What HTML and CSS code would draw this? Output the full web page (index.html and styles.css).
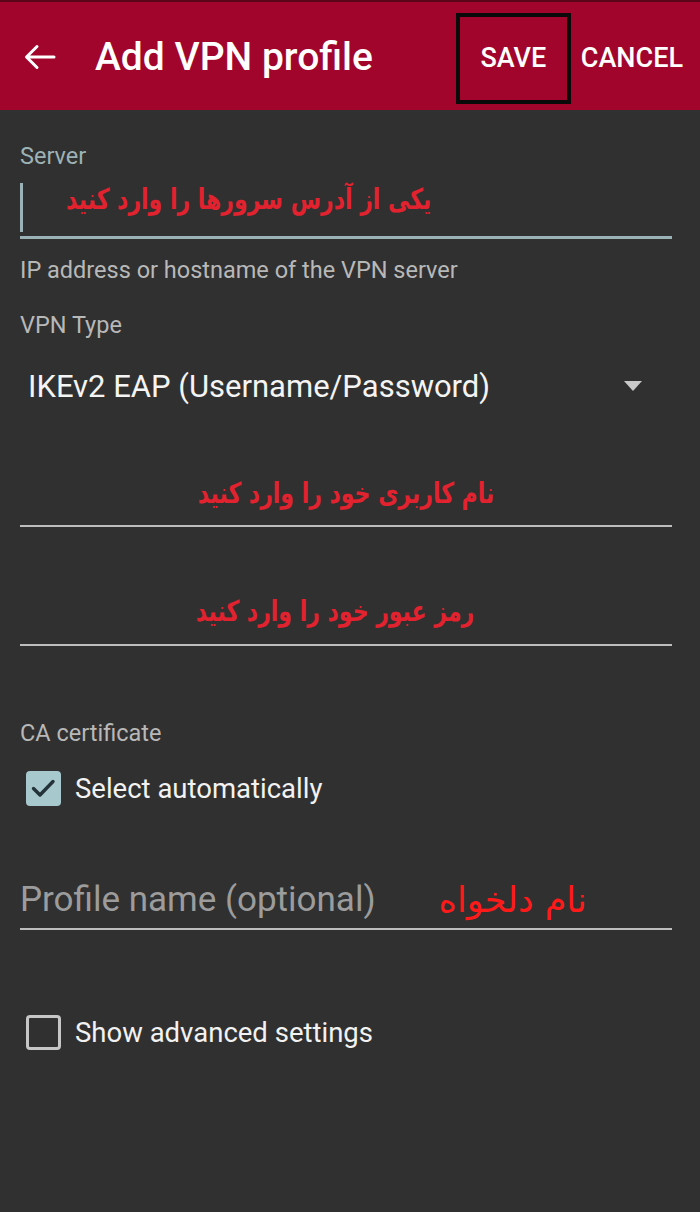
FILE: index.html
```html
<!DOCTYPE html>
<html lang="en">
<head>
<meta charset="utf-8">
<title>Add VPN profile</title>
<link rel="stylesheet" href="styles.css">
</head>
<body>
<header class="appbar">
  <svg class="back" width="32" height="30" viewBox="0 0 32 30" aria-hidden="true">
    <path d="M30 15H3M13 4.5L2.5 15L13 25.5" fill="none" stroke="#ffffff" stroke-width="3" stroke-linecap="round" stroke-linejoin="round"/>
  </svg>
  <h1 class="title">Add VPN profile</h1>
  <button class="action save">SAVE</button>
  <button class="action cancel">CANCEL</button>
</header>

<main class="form">
  <div class="label server-label">Server</div>
  <div class="server-input">
    <span class="cursor"></span>
    <span class="fa fa-bold server-hint" dir="rtl">یکی از آدرس سرورها را وارد کنید</span>
  </div>
  <div class="label help">IP address or hostname of the VPN server</div>

  <div class="label type-label">VPN Type</div>
  <div class="select">
    <span class="select-value">IKEv2 EAP (Username/Password)</span>
    <span class="triangle"></span>
  </div>

  <div class="field user">
    <span class="fa fa-bold" dir="rtl">نام کاربری خود را وارد کنید</span>
  </div>
  <div class="field pass">
    <span class="fa fa-bold" dir="rtl">رمز عبور خود را وارد کنید</span>
  </div>

  <div class="label ca-label">CA certificate</div>
  <div class="check-row auto">
    <span class="box checked">
      <svg width="34" height="34" viewBox="0 0 34 34" aria-hidden="true">
        <path d="M7.5 17.5L14 24L27 10.5" fill="none" stroke="#24323a" stroke-width="3.4" stroke-linecap="round" stroke-linejoin="round"/>
      </svg>
    </span>
    <span class="check-text">Select automatically</span>
  </div>

  <div class="profile">
    <span class="placeholder">Profile name (optional)</span>
    <span class="fa profile-hint" dir="rtl">نام دلخواه</span>
  </div>

  <div class="check-row advanced">
    <span class="box empty"></span>
    <span class="check-text">Show advanced settings</span>
  </div>
</main>
</body>
</html>
```
FILE: styles.css
```css
* { box-sizing: border-box; }
html, body {
  margin: 0;
  padding: 0;
  background: #303030;
}
body {
  width: 700px;
  height: 1212px;
  overflow: hidden;
  font-family: Roboto, "Noto Sans", sans-serif;
  color: #f2f2f2;
}

.appbar {
  height: 110px;
  background: #a2052b;
  border-top: 2px solid #5c0719;
  display: flex;
  align-items: center;
  padding-left: 24px;
}
.back { flex: none; display: block; margin-top: 2px; }
.title {
  margin: 2px 0 0 39px;
  font-size: 39px;
  font-weight: 500;
  color: #ffffff;
  flex: 1;
  white-space: nowrap;
}
.action {
  background: none;
  border: 0;
  color: #ffffff;
  font-family: Roboto, sans-serif;
  font-weight: 500;
  font-size: 27px;
  padding: 0;
  margin-top: 4px;
  flex: none;
}
.save {
  width: 115px;
  height: 91px;
  border: 4px solid #0a0a0a;
  margin-right: 10px;
}
.cancel { margin-right: 17px; }

.form {
  padding: 0 28px 0 20px;
}
.label {
  font-size: 23.5px;
  line-height: 28px;
  color: #b8b8b8;
}
.server-label {
  margin-top: 32px;
  color: #9db3b6;
}
.server-input {
  height: 69px;
  border-bottom: 3px solid #9ab2b5;
  display: flex;
  align-items: flex-start;
}
.cursor {
  width: 3px;
  height: 49px;
  margin-top: 13px;
  background: #9ab2b5;
  flex: none;
}
.fa {
  font-family: "DejaVu Sans", "Noto Sans", sans-serif;
  color: #e2222f;
}
.fa-bold {
  font-weight: bold;
  display: inline-block;
  transform: scaleY(1.3);
}
.server-hint {
  font-size: 22px;
  line-height: 36px;
  margin-top: 12px;
  margin-left: 43px;
}
.help { margin-top: 17px; }
.type-label { margin-top: 27px; }

.select {
  margin-top: 30px;
  height: 36px;
  display: flex;
  align-items: center;
  justify-content: space-between;
  padding-left: 8px;
  padding-right: 30px;
}
.select-value {
  font-size: 31px;
  line-height: 36px;
  color: #f4f4f4;
}
.triangle {
  width: 0;
  height: 0;
  border-left: 9.5px solid transparent;
  border-right: 9.5px solid transparent;
  border-top: 10px solid #c9c9c9;
  margin-top: -2px;
}

.field {
  border-bottom: 2px solid #bdbdbd;
  text-align: center;
  font-size: 22px;
  line-height: 36px;
}
.user { padding: 71px 0 13px; }
.pass { padding: 67px 0 14px; }
.pass .fa { margin-right: 22px; }

.ca-label { margin-top: 73px; }

.check-row {
  display: flex;
  align-items: center;
  height: 40px;
}
.auto { margin-top: 21px; }
.advanced { margin-top: 82px; }
.box {
  width: 35px;
  height: 35px;
  margin-left: 6px;
  margin-right: 14px;
  border-radius: 4px;
  flex: none;
}
.box svg { display: block; }
.checked { background: #a7c9cd; }
.empty { border: 3px solid #c6c6c6; }
.check-text {
  font-size: 27.5px;
  color: #f2f2f2;
}

.profile {
  padding: 71px 0 7px;
  border-bottom: 2px solid #bdbdbd;
  display: flex;
  align-items: center;
  height: 122px;
}
.placeholder {
  font-size: 35px;
  line-height: 42px;
  color: #9c9c9c;
  white-space: nowrap;
}
.profile-hint {
  margin-left: 63px;
  font-size: 35px;
  line-height: 42px;
  color: #ff1a1a;
}
```
